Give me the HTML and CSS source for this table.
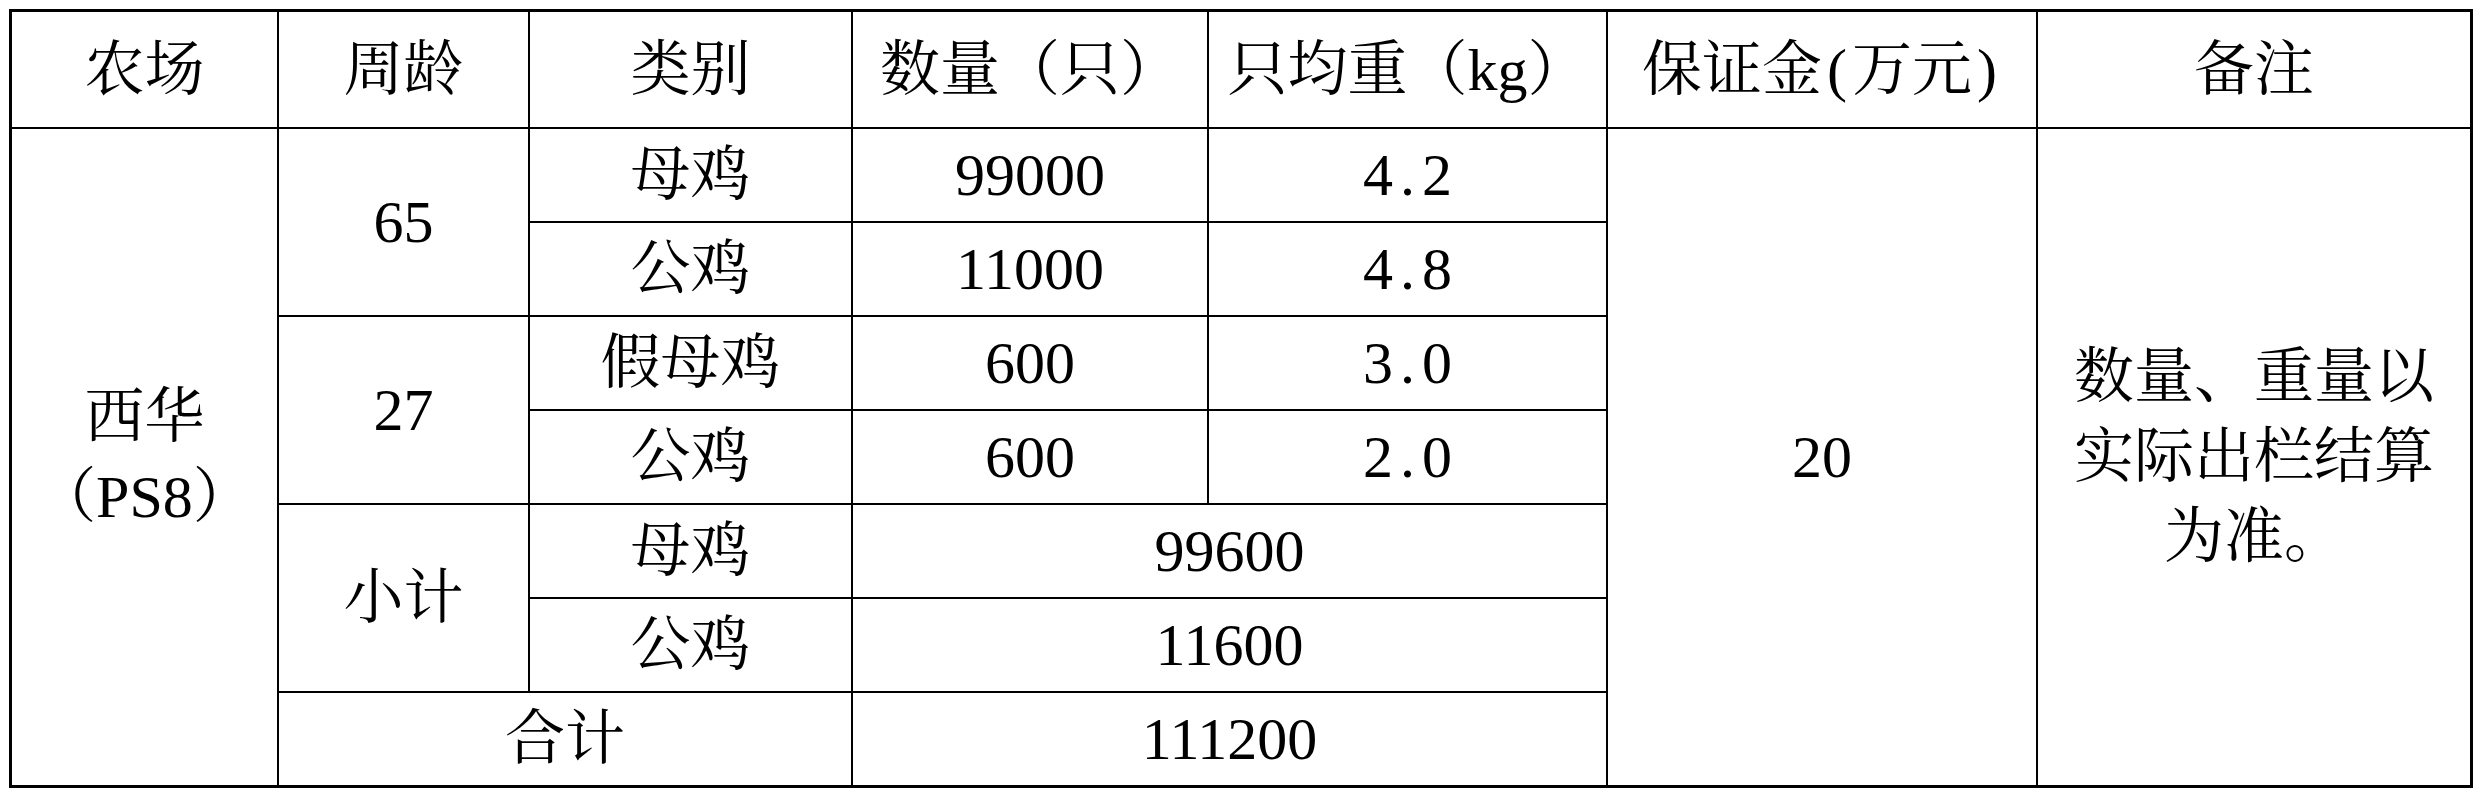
FILE: index.html
```html
<!DOCTYPE html>
<html lang="zh-CN">
<head>
<meta charset="utf-8">
<title>西华（PS8）出栏表</title>
<link rel="stylesheet" href="styles.css">
</head>
<body>
<div class="sheet" role="table">
  <div class="cell" role="columnheader">农场</div>
  <div class="cell" role="columnheader">周龄</div>
  <div class="cell" role="columnheader">类别</div>
  <div class="cell" role="columnheader">数量（只）</div>
  <div class="cell" role="columnheader">只均重（kg）</div>
  <div class="cell" role="columnheader">保证金<span class="half">(</span>万元<span class="half">)</span></div>
  <div class="cell" role="columnheader">备注</div>

  <div class="cell r7 stack">西华<br>（PS8）</div>
  <div class="cell r2">65</div>
  <div class="cell">母鸡</div>
  <div class="cell">99000</div>
  <div class="cell">4<span class="dot">.</span>2</div>
  <div class="cell r7">20</div>
  <div class="cell r7 stack">数量、重量以<br>实际出栏结算<br>为准。</div>

  <div class="cell">公鸡</div>
  <div class="cell">11000</div>
  <div class="cell">4<span class="dot">.</span>8</div>

  <div class="cell r2">27</div>
  <div class="cell">假母鸡</div>
  <div class="cell">600</div>
  <div class="cell">3<span class="dot">.</span>0</div>

  <div class="cell">公鸡</div>
  <div class="cell">600</div>
  <div class="cell">2<span class="dot">.</span>0</div>

  <div class="cell r2">小计</div>
  <div class="cell">母鸡</div>
  <div class="cell c2">99600</div>

  <div class="cell">公鸡</div>
  <div class="cell c2">11600</div>

  <div class="cell c2">合计</div>
  <div class="cell c2">111200</div>
</div>
</body>
</html>
```

FILE: styles.css
```css
html, body {
  margin: 0;
  padding: 0;
  background: #ffffff;
}

body {
  font-family: "Liberation Serif", "Noto Serif CJK SC", "Noto Sans CJK SC", serif;
  font-size: 60px;
  color: #000000;
}

.sheet {
  display: grid;
  grid-template-columns: 265px 249px 321px 354px 397px 428px 432px;
  grid-template-rows: 115px repeat(7, 92px);
  gap: 2px;
  background: #000000;
  border: 3px solid #000000;
  margin: 9px 0 0 9px;
  width: max-content;
}

.cell {
  background: #ffffff;
  display: flex;
  align-items: center;
  justify-content: center;
  text-align: center;
  line-height: 1;
  white-space: nowrap;
}

.stack {
  line-height: 80px;
}

.r7 { grid-row: span 7; }
.r2 { grid-row: span 2; }
.c2 { grid-column: span 2; }

.half {
  padding: 0 5px;
}

.dot {
  padding: 0 7px;
}
```
